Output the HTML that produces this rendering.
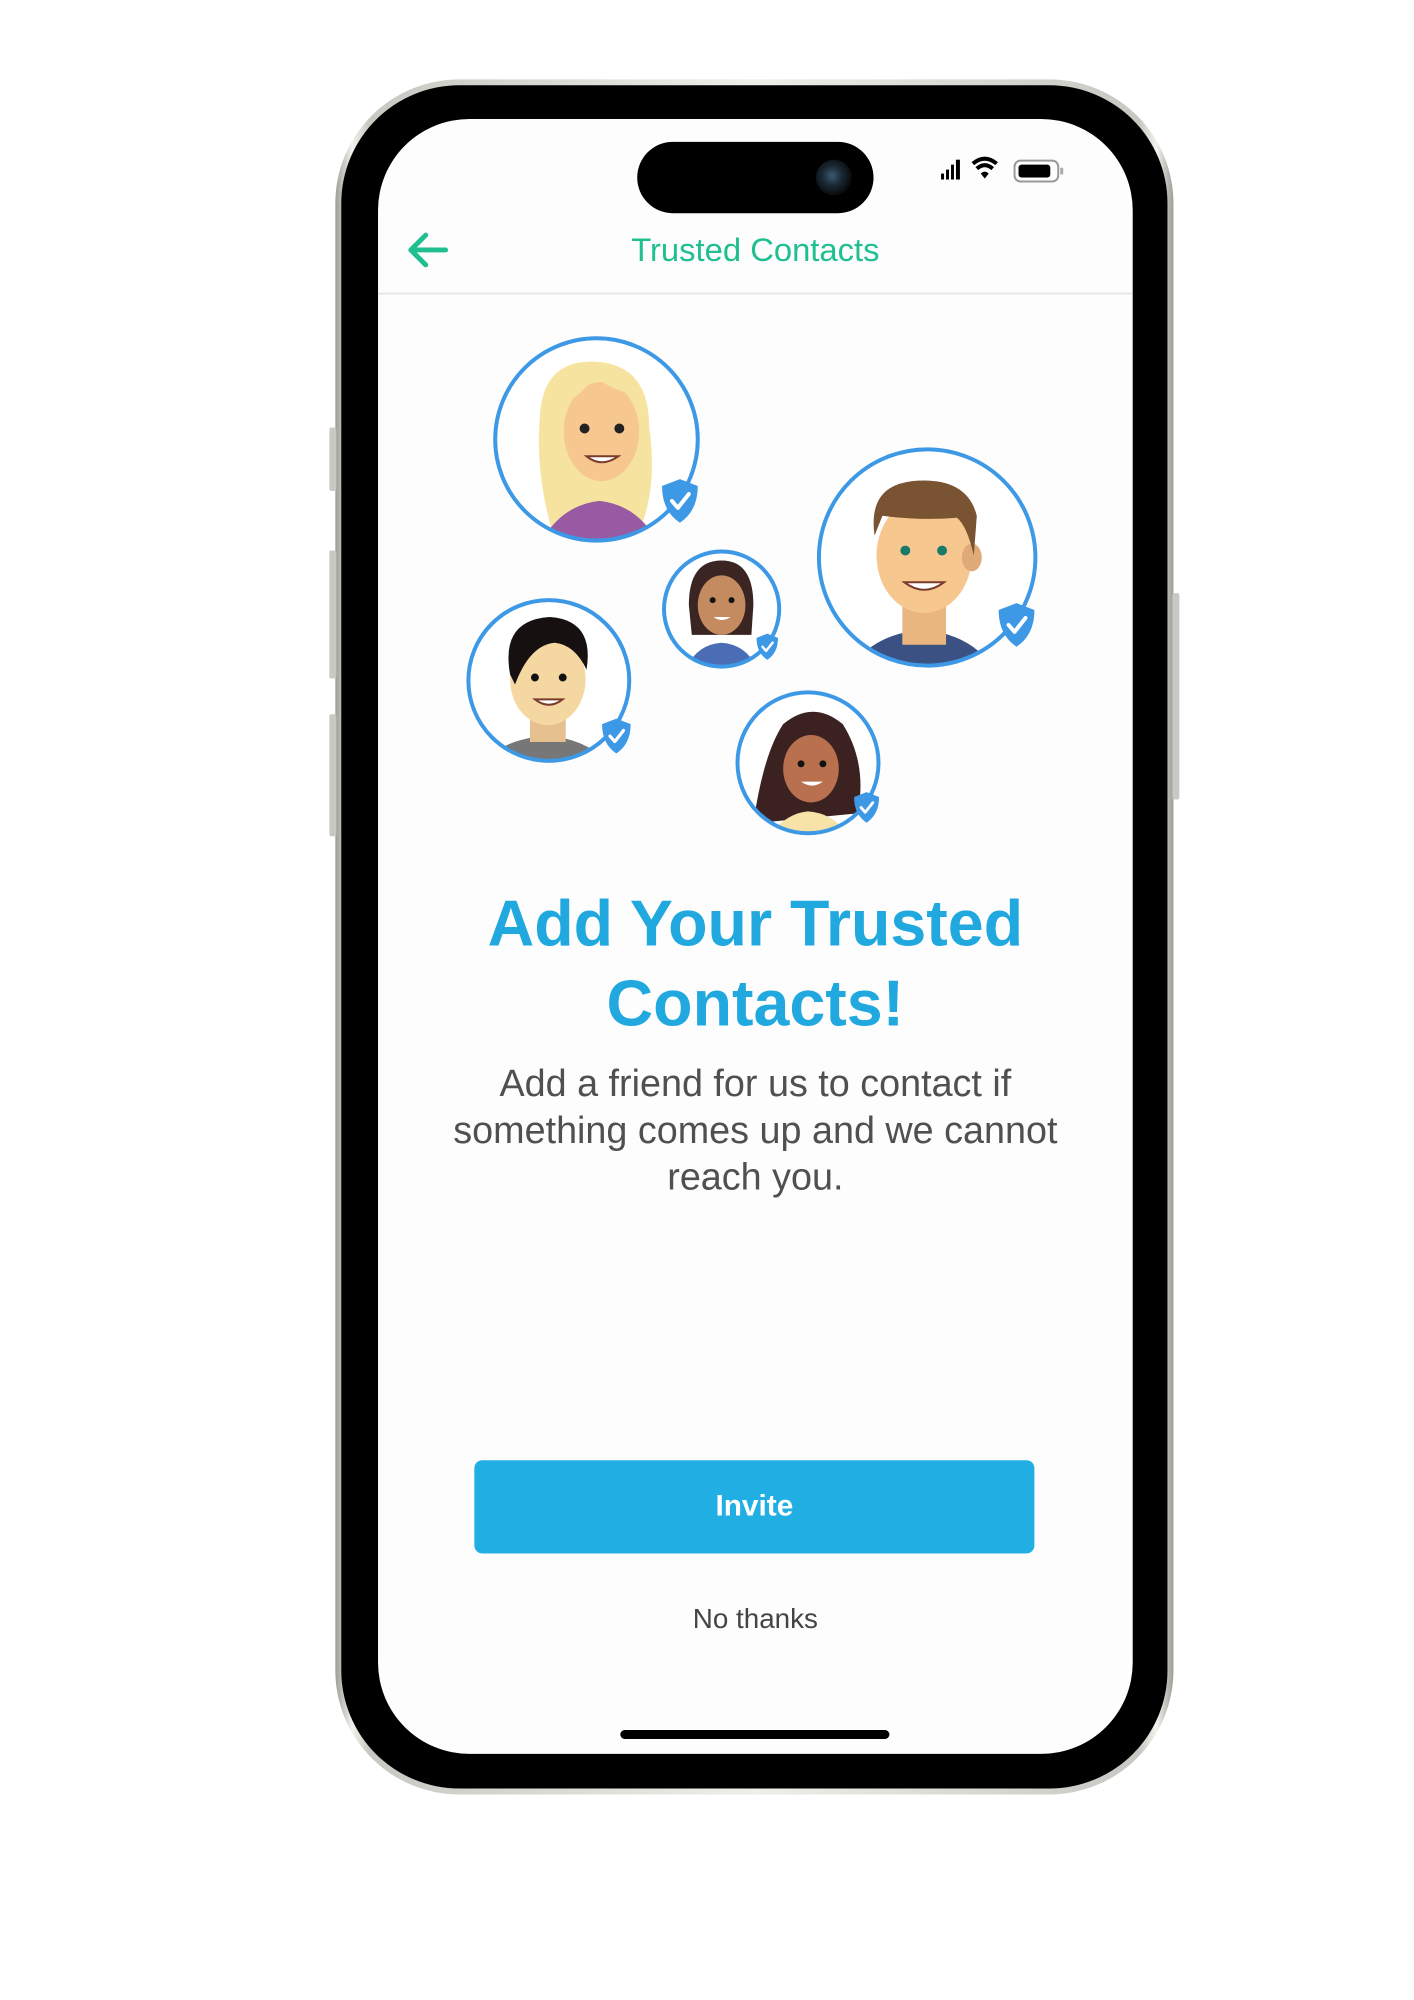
<!DOCTYPE html>
<html><head><meta charset="utf-8"><style>
html,body{margin:0;padding:0;background:#fff;}
body{width:1414px;height:2000px;position:relative;overflow:hidden;font-family:"Liberation Sans",sans-serif;}
.wrap{position:absolute;left:0;top:0;width:1414px;height:2000px;transform-origin:386px 121px;transform:translate(-4px,-1px) scale(0.993,0.992);}
.frame{position:absolute;left:339px;top:80px;width:844px;height:1729px;border-radius:125px;background:linear-gradient(90deg,#9d9d98,#f2f2ee 2%,#c8c8c2 4%,#eeeeea 50%,#c8c8c2 96%,#f2f2ee 98%,#9d9d98);}
.bezel{position:absolute;left:345px;top:86px;width:832px;height:1717px;border-radius:119px;background:#000;}
.screen{position:absolute;left:382px;top:120px;width:760px;height:1648px;border-radius:92px;background:#fdfdfd;overflow:hidden;}
.btn{position:absolute;background:#c9c9c4;border-radius:2px;}
.island{position:absolute;left:261px;top:23px;width:238px;height:72px;border-radius:36px;background:#000;}
.cam{position:absolute;right:22px;top:18px;width:36px;height:36px;border-radius:50%;background:radial-gradient(circle at 45% 45%,#3c5a70 0,#1a2a36 35%,#0b0b0b 70%);}
.title{position:absolute;left:0;width:760px;top:112px;text-align:center;color:#1fbf8f;font-size:33px;line-height:40px;}
.divider{position:absolute;left:0;right:0;top:175px;height:2px;background:#e6e6e6;}
h1{position:absolute;left:0;width:760px;top:770px;margin:0;text-align:center;color:#21a9df;font-size:65px;line-height:81px;font-weight:bold;}
.body{position:absolute;left:0;width:760px;top:950px;text-align:center;color:#505050;font-size:38px;line-height:47px;}
.invite{position:absolute;left:97px;top:1352px;width:564px;height:94px;border-radius:8px;background:#21aee3;color:#fff;font-size:30px;line-height:94px;text-align:center;font-weight:bold;}
.no{position:absolute;left:0;width:760px;top:1494px;text-align:center;color:#444;font-size:28px;line-height:36px;}
.home{position:absolute;left:244px;top:1624px;width:271px;height:9px;border-radius:5px;background:#000;}
</style></head><body>
<div class="wrap">
<div class="frame"></div>
<div class="bezel"></div>
<div class="btn" style="left:333px;top:431px;width:7px;height:64px"></div>
<div class="btn" style="left:333px;top:555px;width:7px;height:129px"></div>
<div class="btn" style="left:333px;top:720px;width:7px;height:123px"></div>
<div class="btn" style="left:1182px;top:598px;width:7px;height:208px"></div>
<div class="screen">
  <div class="island"><div class="cam"></div></div>
  <svg style="position:absolute;left:565px;top:33px" width="150" height="36" viewBox="0 0 150 36">
    <rect x="2" y="22" width="3" height="6" fill="#000"/><rect x="7" y="18" width="3" height="10" fill="#000"/><rect x="12" y="13" width="3" height="15" fill="#000"/><rect x="17" y="8" width="4" height="20" fill="#000"/>
    <path d="M34 12 Q46 2 58 12" stroke="#000" stroke-width="4" fill="none"/><path d="M38 17 Q46 10 54 17" stroke="#000" stroke-width="4" fill="none"/><path d="M42 22 L46 27 L50 22 Q46 18 42 22Z" fill="#000"/>
    <rect x="76" y="9" width="44" height="21" rx="6" fill="none" stroke="#999" stroke-width="2"/><rect x="80" y="13" width="32" height="13" rx="3" fill="#000"/><rect x="122" y="16" width="3" height="7" rx="1" fill="#aaa"/>
  </svg>
  <svg style="position:absolute;left:28px;top:112px" width="44" height="40" viewBox="0 0 44 40"><path d="M40 20 H6 M20 5 L5 20 L20 35" stroke="#1fbf8f" stroke-width="5" fill="none" stroke-linecap="round" stroke-linejoin="round"/></svg>
  <div class="title">Trusted Contacts</div>
  <div class="divider"></div>
  <svg style="position:absolute;left:0;top:190px" width="760" height="680" viewBox="382 310 760 680">
    <defs>
      <g id="sh"><path d="M0 -22 L18 -15 Q18 10 0 22 Q-18 10 -18 -15Z" fill="#3d98e6"/><path d="M-8 0 L-2 7 L9 -7" stroke="#fff" stroke-width="4" fill="none" stroke-linecap="round" stroke-linejoin="round"/></g>
    </defs>
    <clipPath id="ca"><circle cx="602" cy="443" r="102"/></clipPath>
    <circle cx="602" cy="443" r="102" fill="#fff"/>
    <g clip-path="url(#ca)">
      <path d="M545 420 Q548 360 605 365 Q655 370 655 430 Q665 500 640 545 L560 545 Q540 480 545 420Z" fill="#f6e3a0"/>
      <ellipse cx="607" cy="435" rx="38" ry="50" fill="#f7c790"/>
      <path d="M565 380 Q610 350 650 400 Q620 395 600 380 Q585 400 565 410Z" fill="#f6e3a0"/>
      <path d="M540 560 Q560 510 605 505 Q650 510 670 560Z" fill="#985aa3"/>
      <circle cx="590" cy="432" r="5" fill="#222"/><circle cx="625" cy="432" r="5" fill="#222"/>
      <path d="M592 460 Q607 472 624 460 Z" fill="#fff" stroke="#7a3b2a" stroke-width="2"/>
    </g>
    <circle cx="602" cy="443" r="102" fill="none" stroke="#3d98e6" stroke-width="4"/>
    <use href="#sh" x="686" y="505"/>
    <clipPath id="cb"><circle cx="935" cy="562" r="109"/></clipPath>
    <circle cx="935" cy="562" r="109" fill="#fff"/>
    <g clip-path="url(#cb)">
      <path d="M850 690 Q870 640 930 635 Q990 640 1010 690Z" fill="#3b5183"/>
      <rect x="910" y="590" width="44" height="60" fill="#e9b680"/>
      <ellipse cx="932" cy="560" rx="48" ry="58" fill="#f7c790"/>
      <ellipse cx="980" cy="562" rx="10" ry="14" fill="#e0a978"/>
      <path d="M882 540 Q875 490 920 485 Q975 480 985 520 L982 560 Q975 530 965 522 Q930 525 890 520 Z" fill="#7a5432"/>
      <circle cx="913" cy="555" r="5" fill="#1a7a6a"/><circle cx="950" cy="555" r="5" fill="#1a7a6a"/>
      <path d="M912 587 Q932 602 952 587 Z" fill="#fff" stroke="#7a3b2a" stroke-width="2"/>
    </g>
    <circle cx="935" cy="562" r="109" fill="none" stroke="#3d98e6" stroke-width="4"/>
    <use href="#sh" x="1025" y="630"/>
    <clipPath id="cc"><circle cx="728" cy="614" r="58"/></clipPath>
    <circle cx="728" cy="614" r="58" fill="#fff"/>
    <g clip-path="url(#cc)">
      <path d="M690 680 Q700 650 728 648 Q756 650 766 680Z" fill="#4b6db5"/>
      <path d="M695 610 Q695 565 728 565 Q760 565 760 610 L758 640 L698 640Z" fill="#3a2522"/>
      <ellipse cx="728" cy="610" rx="24" ry="30" fill="#c58b60"/>
      <circle cx="719" cy="605" r="3" fill="#111"/><circle cx="738" cy="605" r="3" fill="#111"/>
      <path d="M720 622 Q728 628 737 622Z" fill="#fff"/>
    </g>
    <circle cx="728" cy="614" r="58" fill="none" stroke="#3d98e6" stroke-width="4"/>
    <use href="#sh" transform="translate(774 652) scale(0.6)"/>
    <clipPath id="cd"><circle cx="554" cy="686" r="81"/></clipPath>
    <circle cx="554" cy="686" r="81" fill="#fff"/>
    <g clip-path="url(#cd)">
      <path d="M480 780 Q500 745 552 742 Q600 745 620 780Z" fill="#777"/>
      <rect x="535" y="700" width="36" height="48" fill="#e6c08e"/>
      <ellipse cx="553" cy="685" rx="38" ry="46" fill="#f5d7a2"/>
      <path d="M515 680 Q505 625 555 622 Q600 625 592 675 Q580 650 560 648 Q535 650 520 690Z" fill="#161010"/>
      <circle cx="540" cy="683" r="4" fill="#111"/><circle cx="568" cy="683" r="4" fill="#111"/>
      <path d="M540 705 Q554 716 568 705Z" fill="#fff" stroke="#7a3b2a" stroke-width="2"/>
    </g>
    <circle cx="554" cy="686" r="81" fill="none" stroke="#3d98e6" stroke-width="4"/>
    <use href="#sh" transform="translate(622 742) scale(0.8)"/>
    <clipPath id="ce"><circle cx="815" cy="769" r="71"/></clipPath>
    <circle cx="815" cy="769" r="71" fill="#fff"/>
    <g clip-path="url(#ce)">
      <path d="M760 830 Q770 760 790 730 Q820 705 850 730 Q875 770 865 820 Z" fill="#3b2220"/>
      <path d="M770 850 Q790 820 815 818 Q845 820 860 850Z" fill="#f7e3a7"/>
      <ellipse cx="818" cy="775" rx="28" ry="34" fill="#b8704e"/>
      <circle cx="808" cy="770" r="3.5" fill="#111"/><circle cx="830" cy="770" r="3.5" fill="#111"/>
      <path d="M808 788 Q819 796 830 788Z" fill="#fff"/>
    </g>
    <circle cx="815" cy="769" r="71" fill="none" stroke="#3d98e6" stroke-width="4"/>
    <use href="#sh" transform="translate(874 814) scale(0.7)"/>
  </svg>
  <h1>Add Your Trusted<br>Contacts!</h1>
  <div class="body">Add a friend for us to contact if<br>something comes up and we cannot<br>reach you.</div>
  <div class="invite">Invite</div>
  <div class="no">No thanks</div>
  <div class="home"></div>
</div>
</div>
</body></html>
